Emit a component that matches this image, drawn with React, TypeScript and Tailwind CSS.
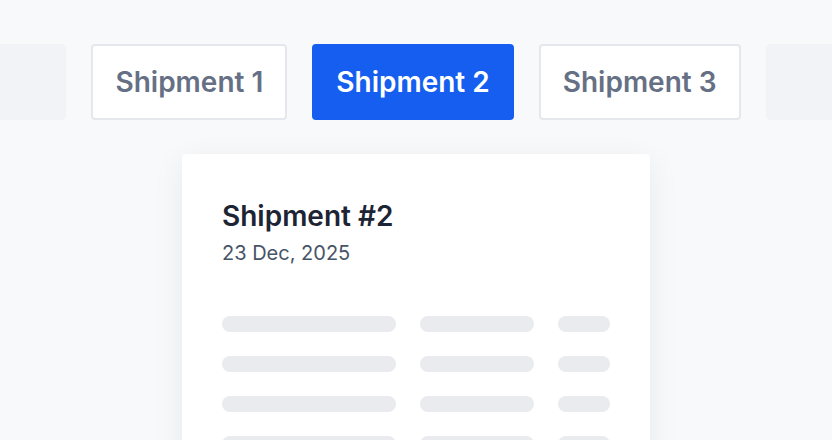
const tabs = [
  { label: "Shipment 1", active: false },
  { label: "Shipment 2", active: true },
  { label: "Shipment 3", active: false },
];

const rows = [0, 1, 2, 3];

export default function App() {
  return (
    <div
      className="h-[440px] w-[832px] overflow-hidden bg-[#f8f9fb]"
      style={{ fontFamily: "Inter, 'Noto Sans', sans-serif" }}
    >
      <div className="mt-[44px] flex justify-center gap-[25px]">
        <div className="h-[76px] w-[200px] shrink-0 rounded-[4px] bg-[#f2f3f6]" />
        {tabs.map((tab) => (
          <button
            key={tab.label}
            type="button"
            className={`flex h-[76px] shrink-0 items-center justify-center rounded-[4px] border-2 px-[22px] text-[28px] font-semibold leading-9 ${
              tab.active
                ? "border-[#155eef] bg-[#155eef] text-white"
                : "border-[#e4e7ec] bg-white text-[#667085]"
            }`}
          >
            {tab.label}
          </button>
        ))}
        <div className="h-[76px] w-[200px] shrink-0 rounded-[4px] bg-[#f2f3f6]" />
      </div>

      <div className="mx-auto mt-[34px] w-[468px] rounded-[4px] bg-white px-10 pb-10 pt-11 shadow-[0_8px_32px_rgba(16,24,40,0.07)]">
        <h2 className="text-[28px] font-semibold leading-9 text-[#1d2433]">Shipment #2</h2>
        <p className="mt-[5px] text-[20px] leading-7 text-[#475467]">23 Dec, 2025</p>

        <div className="mt-[49px] flex flex-col gap-6">
          {rows.map((row) => (
            <div key={row} className="flex gap-6">
              <div className="h-4 w-[174px] rounded-full bg-[#eaebee]" />
              <div className="h-4 w-[114px] rounded-full bg-[#eaebee]" />
              <div className="h-4 w-[52px] rounded-full bg-[#eaebee]" />
            </div>
          ))}
        </div>
      </div>
    </div>
  );
}
